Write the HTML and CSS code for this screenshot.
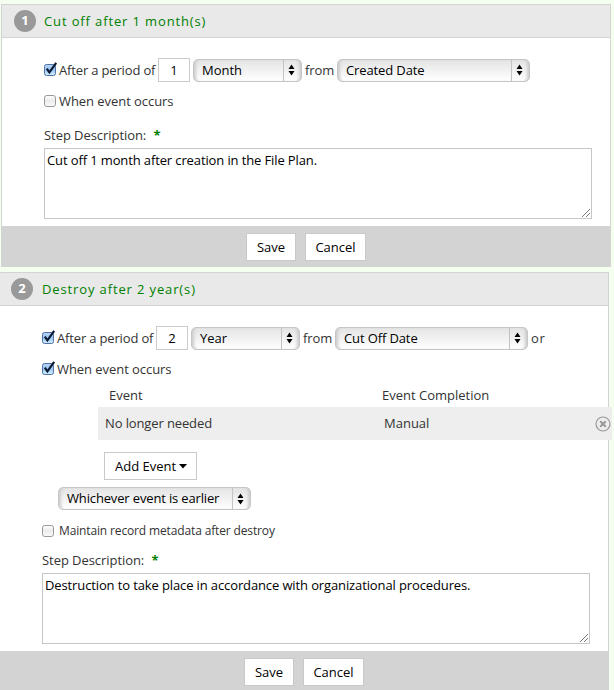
FILE: index.html
```
<!DOCTYPE html>
<html lang="en">
<head>
<meta charset="utf-8">
<title>Disposition Steps</title>
<link rel="stylesheet" href="styles.css">
</head>
<body>
<svg class="defs" aria-hidden="true">
  <defs>
    <linearGradient id="blue" x1="0" y1="0" x2="0" y2="1"><stop offset="0" stop-color="#b4d3f5"/><stop offset=".5" stop-color="#9cc6f3"/><stop offset="1" stop-color="#d3f0ff"/></linearGradient>
    <linearGradient id="gray" x1="0" y1="0" x2="0" y2="1"><stop offset="0" stop-color="#ffffff"/><stop offset=".45" stop-color="#ececec"/><stop offset="1" stop-color="#fafafa"/></linearGradient>
    <symbol id="checked" viewBox="0 0 14 16"><rect x=".5" y="3.5" width="11" height="11" rx="2" fill="url(#blue)" stroke="#5270a6"/><path d="M2.8 7.6 5.4 11.4 12.2 1.8" fill="none" stroke="#0b1a33" stroke-width="2.2"/></symbol>
    <symbol id="unchecked" viewBox="0 0 14 16"><rect x=".5" y="3.5" width="11" height="11" rx="2.3" fill="url(#gray)" stroke="#999"/></symbol>
    <symbol id="arrows" viewBox="0 0 7 12"><path d="M3.5 .5 6.5 4.9H.5ZM3.5 11.5 6.5 7.1H.5Z"/></symbol>
  </defs>
</svg>
<section class="card">
  <header class="head"><span class="num">1</span><h2>Cut off after 1 month(s)</h2></header>
  <div class="body">
    <div class="row period">
      <svg class="check"><use href="#checked"/></svg><span class="lead">After a period of</span>
      <span class="input">1</span>
      <span class="select unit"><span>Month</span><i><svg><use href="#arrows"/></svg></i></span>
      <span class="from">from</span>
      <span class="select wide"><span>Created Date</span><i><svg><use href="#arrows"/></svg></i></span>
    </div>
    <div class="row event"><svg class="check"><use href="#unchecked"/></svg><span>When event occurs</span></div>
    <div class="desc-label">Step Description: <b>*</b></div>
    <div class="area">Cut off 1 month after creation in the File Plan.<svg class="grip" viewBox="0 0 8 8"><path d="M0 8 8 0M4 8 8 4"/></svg></div>
  </div>
  <footer class="foot"><span class="btn save">Save</span><span class="btn cancel">Cancel</span></footer>
</section>
<section class="card second">
  <header class="head"><span class="num">2</span><h2>Destroy after 2 year(s)</h2></header>
  <div class="body">
    <div class="row period">
      <svg class="check"><use href="#checked"/></svg><span class="lead">After a period of</span>
      <span class="input">2</span>
      <span class="select unit"><span>Year</span><i><svg><use href="#arrows"/></svg></i></span>
      <span class="from">from</span>
      <span class="select wide"><span>Cut Off Date</span><i><svg><use href="#arrows"/></svg></i></span>
      <span class="or">or</span>
    </div>
    <div class="row event"><svg class="check"><use href="#checked"/></svg><span>When event occurs</span></div>
    <div class="events">
      <div class="ev-head"><span>Event</span><span>Event Completion</span></div>
      <div class="ev-row"><span>No longer needed</span><span>Manual</span>
        <svg class="remove" viewBox="0 0 16 16"><circle cx="8" cy="8" r="7"/><path d="M5.2 5.2 10.8 10.8M10.8 5.2 5.2 10.8"/></svg>
      </div>
      <span class="btn add">Add Event<svg viewBox="0 0 8 5"><path d="M0 0H8L4 4.6Z"/></svg></span>
    </div>
    <span class="select which"><span>Whichever event is earlier</span><i><svg><use href="#arrows"/></svg></i></span>
    <div class="row keep"><svg class="check"><use href="#unchecked"/></svg><span>Maintain record metadata after destroy</span></div>
    <div class="desc-label">Step Description: <b>*</b></div>
    <div class="area">Destruction to take place in accordance with organizational procedures.<svg class="grip" viewBox="0 0 8 8"><path d="M0 8 8 0M4 8 8 4"/></svg></div>
  </div>
  <footer class="foot"><span class="btn save">Save</span><span class="btn cancel">Cancel</span></footer>
</section>
</body>
</html>
```
FILE: styles.css
```
* { box-sizing: border-box; }
body {
  margin: 0;
  padding-top: 4px;
  height: 690px;
  overflow: hidden;
  background: #f4fff0;
  font: 13px/18px "Open Sans", sans-serif;
  letter-spacing: -.12px;
  color: #333;
}
svg { display: block; flex: none; }
.defs { position: absolute; width: 0; height: 0; }
.card {
  width: 610px;
  margin: 0 0 5px 1px;
  border: 1px solid #d3d3d3;
  border-bottom: 0;
  background: #fff;
  white-space: nowrap;
}
.second { margin-left: -1px; }
.head {
  display: flex;
  align-items: center;
  height: 33px;
  padding-left: 12px;
  background: #e9e9e9;
  border-bottom: 1px solid #d3d3d3;
}
.second .head { padding-left: 11px; }
.num {
  width: 22px;
  height: 22px;
  margin-right: 8px;
  border-radius: 50%;
  background: #999;
  color: #fff;
  font-weight: 700;
  line-height: 21px;
  text-align: center;
}
.second .num { margin-right: 9px; }
h2 { margin: 0; font-size: 13px; font-weight: 400; letter-spacing: .87px; color: #008000; }
.body { padding: 20px 18px 7px 42px; }
.row { display: flex; align-items: center; }
.period { height: 24px; }
.check { width: 14px; height: 16px; margin: -2px 1px 0 0; }
.lead { width: 99px; letter-spacing: -.16px; }
.input {
  width: 32px;
  height: 24px;
  margin-right: 3px;
  border: 1px solid #ccc;
  background: #fff;
  color: #000;
  line-height: 23px;
  text-align: center;
}
.select {
  display: flex;
  align-items: center;
  justify-content: space-between;
  height: 23px;
  padding-left: 8px;
  border: 1px solid #c6c6c6;
  border-radius: 5px;
  background: linear-gradient(#e4e4e4, #fff);
  box-shadow: inset 4px 0 3px -2px #ccc, inset -4px 0 3px -2px #ccc;
  color: #000;
}
.select i {
  display: flex;
  align-items: center;
  justify-content: center;
  width: 18px;
  height: 21px;
  padding-right: 2px;
  border-left: 1px solid #c3c3c3;
}
.select i svg { width: 7px; height: 12px; }
.unit { width: 109px; letter-spacing: 0; }
.from { width: 35px; padding-left: 3px; }
.wide { width: 193px; }
.or { padding-left: 3px; letter-spacing: .7px; }
.event { height: 18px; margin-top: 10px; letter-spacing: -.06px; }
.desc-label { margin-top: 16px; height: 18px; letter-spacing: -.06px; }
.desc-label b { margin-left: 4px; color: #008000; }
.area {
  position: relative;
  width: 548px;
  height: 71px;
  margin-top: 4px;
  padding: 2px;
  border: 1px solid #c6c6c6;
  color: #000;
}
.grip { position: absolute; right: 1px; bottom: 1px; width: 8px; height: 8px; fill: none; stroke: #555; stroke-width: .8; }
.foot {
  display: flex;
  justify-content: center;
  gap: 9px;
  height: 41px;
  margin: 0 -1px;
  padding-top: 7px;
  background: #d3d3d3;
}
.btn {
  height: 28px;
  border: 1px solid #c9c9c9;
  background: #fff;
  color: #000;
  letter-spacing: 0;
  line-height: 26px;
  text-align: center;
}
.save { width: 50px; }
.cancel { width: 61px; }
.events { width: 514px; margin: 8px 0 0 56px; }
.ev-head { display: flex; height: 21px; padding-left: 11px; letter-spacing: 0; }
.ev-head span:first-child { width: 273px; }
.ev-row { display: flex; align-items: center; height: 33px; padding: 0 1px 0 7px; background: #eee; position: relative; }
.ev-row span { padding-bottom: 2px; }
.ev-row span:first-child { width: 279px; }
.ev-row span + span { letter-spacing: 0; }
.remove { width: 16px; height: 16px; margin-left: auto; fill: none; stroke: #999; stroke-width: 1.2; }
.remove path { stroke-width: 2; }
.add { display: flex; align-items: center; width: 93px; margin: 12px 0 0 6px; padding-left: 10px; }
.add svg { width: 8px; height: 5px; margin-left: 3px; }
.which { width: 193px; margin: 7px 0 0 16px; letter-spacing: -.15px; }
.which > span { padding-bottom: 2px; }
.keep { height: 18px; margin-top: 12px; font-size: 12px; letter-spacing: -.14px; }
.keep .check { margin-right: 3px; }
.keep + .desc-label { margin-top: 11px; }
```
